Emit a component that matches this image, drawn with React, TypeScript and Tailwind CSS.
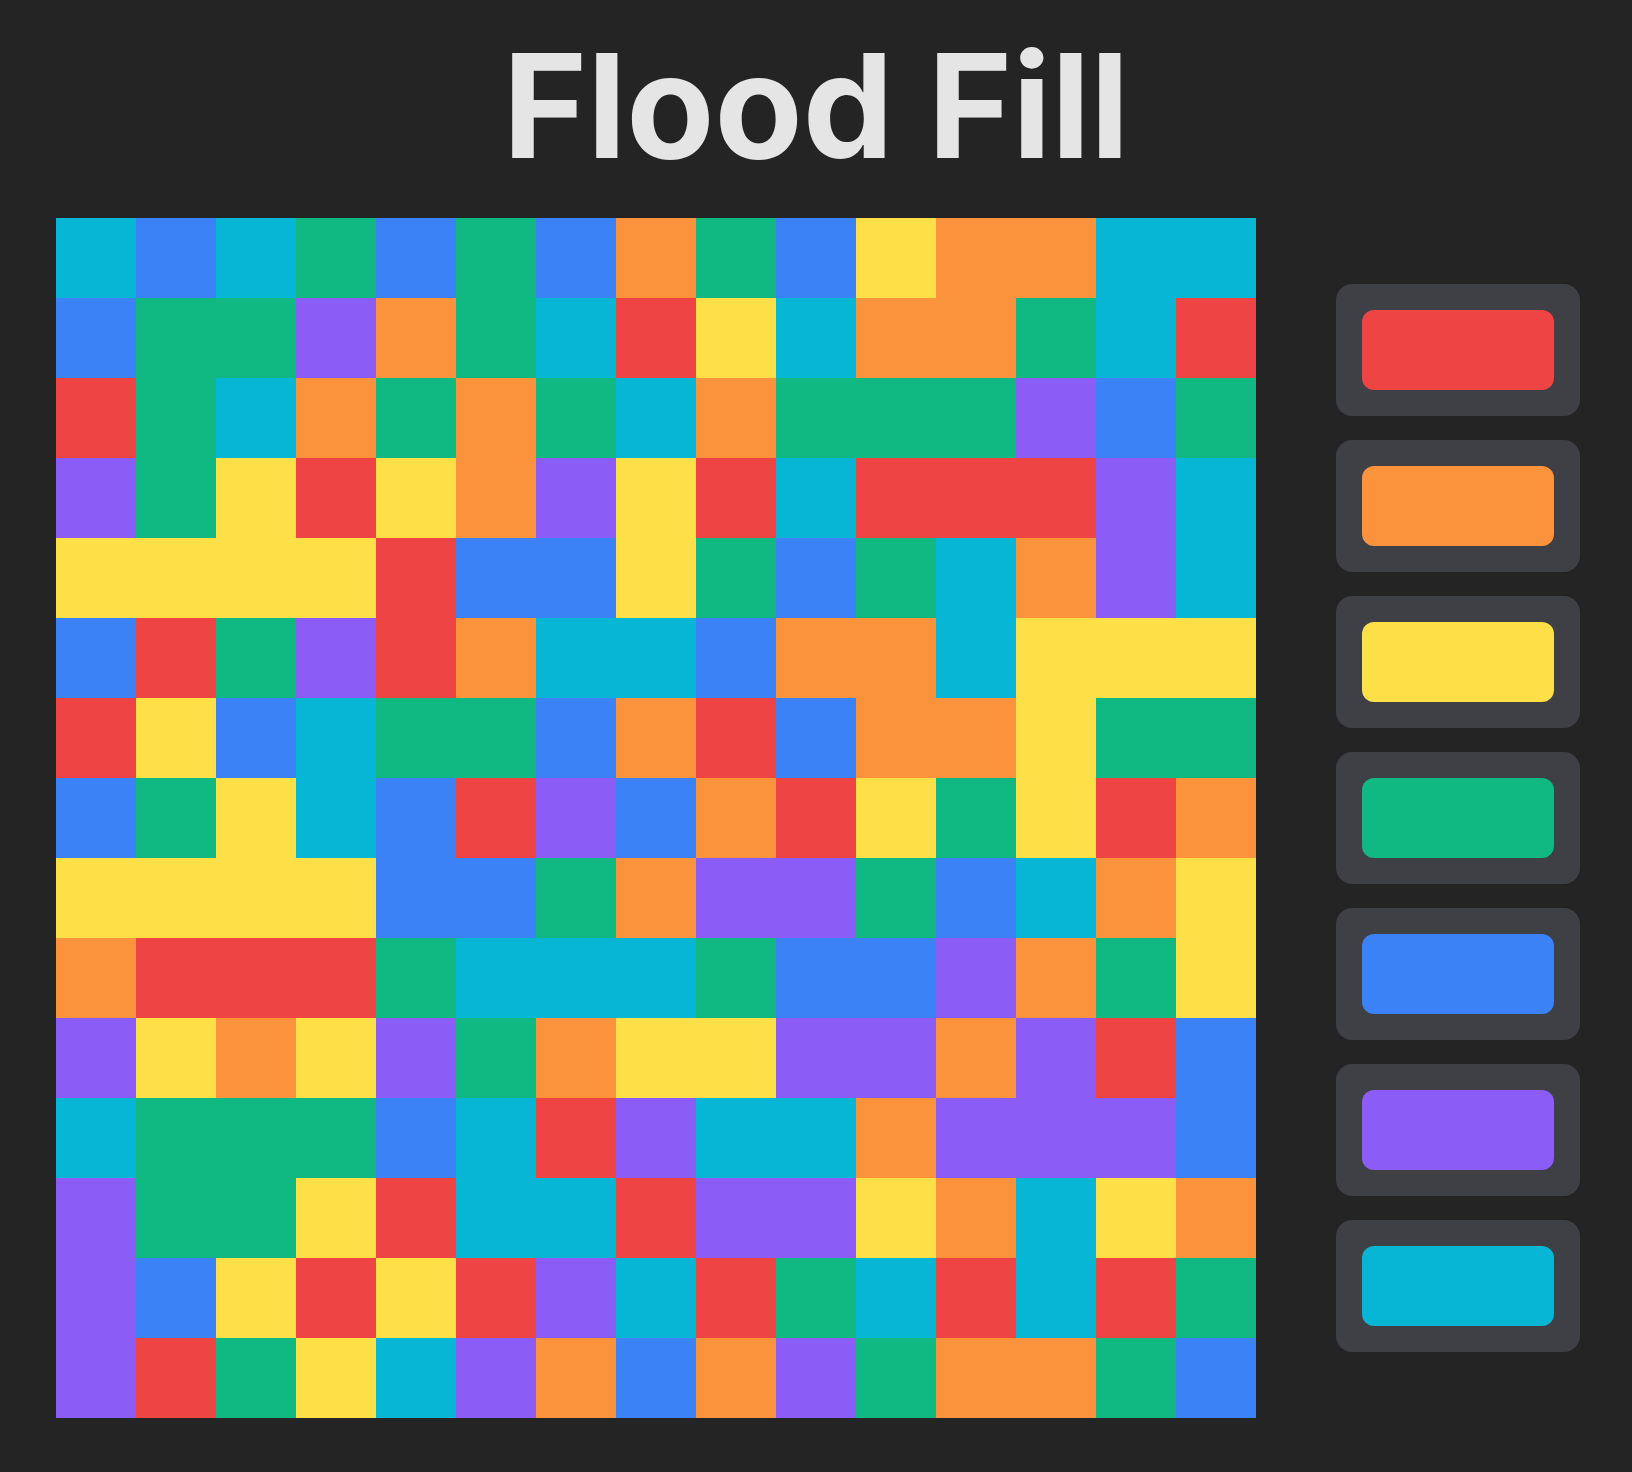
const COLORS: Record<string, string> = {
  r: 'bg-[#ef4444]',
  o: 'bg-[#fb923c]',
  y: 'bg-[#fde047]',
  g: 'bg-[#10b981]',
  b: 'bg-[#3b82f6]',
  p: 'bg-[#8b5cf6]',
  c: 'bg-[#06b6d4]',
};

const PALETTE = ['r', 'o', 'y', 'g', 'b', 'p', 'c'];

// one string per row, one letter per cell
const BOARD = [
  'cbcgbgbogbyoocc',
  'bggpogcrycoogcr',
  'rgcogogcogggpbg',
  'pgyryopyrcrrrpc',
  'yyyyrbbygbgcopc',
  'brgproccboocyyy',
  'rybcggborbooygg',
  'bgycbrpborygyro',
  'yyyybbgoppgbcoy',
  'orrrgcccgbbpogy',
  'pyoypgoyyppoprb',
  'cgggbcrpccopppb',
  'pggyrccrppyocyo',
  'pbyryrpcrgcrcrg',
  'prgycpobopgoogb',
];

function Cell({ color }: { color: string }) {
  return <div className={`h-20 w-20 ${COLORS[color]}`} />;
}

function ColorButton({ color }: { color: string }) {
  return (
    <button className="rounded-2xl bg-[#3f3f46] p-[26px]">
      <div className={`h-20 w-48 rounded-xl ${COLORS[color]}`} />
    </button>
  );
}

export default function App() {
  return (
    <div className="min-h-screen bg-[#242424] pt-[34px] font-['Inter',sans-serif]">
      <h1 className="mb-10 text-center text-[144px] leading-none font-bold text-[#e5e5e5]">
        Flood Fill
      </h1>
      <div className="flex items-center gap-20 pl-14">
        <div className="grid grid-cols-[repeat(15,80px)]">
          {BOARD.flatMap((row, i) =>
            row.split('').map((c, j) => <Cell key={`${i}-${j}`} color={c} />),
          )}
        </div>
        <div className="flex flex-col gap-6">
          {PALETTE.map((c) => (
            <ColorButton key={c} color={c} />
          ))}
        </div>
      </div>
    </div>
  );
}
